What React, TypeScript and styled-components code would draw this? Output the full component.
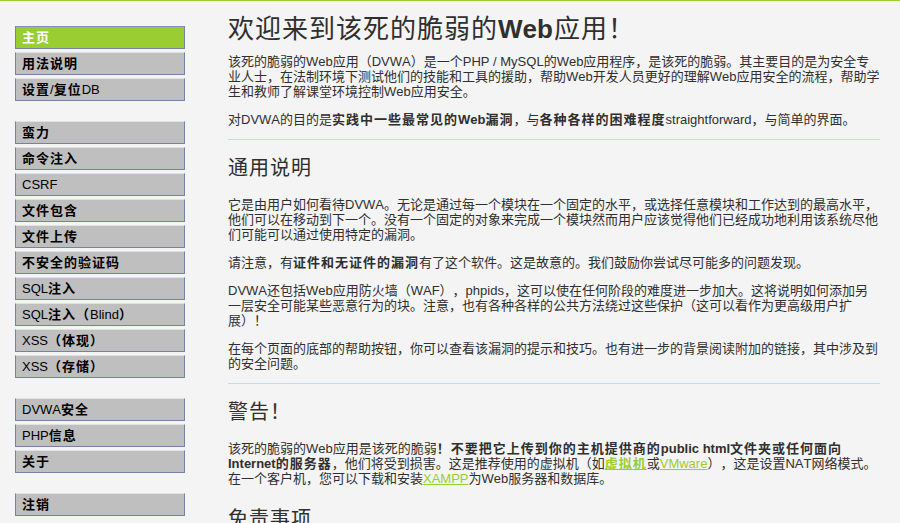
import React from "react";
import styled, { createGlobalStyle } from "styled-components";

const Global = createGlobalStyle`
  html, body { margin: 0; padding: 0; }
  body {
    background: #f4f4f4;
    color: #2f2f2f;
    font: 13px/15px "Liberation Sans", "Noto Sans CJK SC", sans-serif;
    text-spacing-trim: space-all;
    font-kerning: none;
    font-feature-settings: "halt" 0, "chws" 0, "palt" 0, "kern" 0;
  }
`;

const Page = styled.div`
  border-top: 1px solid #9acd32;
  display: flex;
  align-items: flex-start;
  gap: 43px;
  padding: 25px 20px 0 15px;
  height: 497px;
  overflow: hidden;
`;

const Menu = styled.nav`
  width: 170px;
  flex: none;
  display: flex;
  flex-direction: column;
  gap: 20px;
`;

const Group = styled.ul`
  list-style: none;
  margin: 0;
  padding: 0;
  display: flex;
  flex-direction: column;
  gap: 3px;
`;

const Item = styled.li<{ $selected?: boolean }>`
  box-sizing: border-box;
  height: 23px;
  padding: 0 0 0 6px;
  display: flex;
  align-items: center;
  font-weight: bold;
  font-size: 13px;
  letter-spacing: 1px;
  white-space: pre;
  background: ${(p) => (p.$selected ? "#9acd32" : "#bfbfbf")};
  color: ${(p) => (p.$selected ? "#ffffff" : "#000000")};
  border: 1px solid #7383a3;
  border-top-color: ${(p) => (p.$selected ? "#7f8fbf" : "#e2e2e2")};
`;

const Latin = styled.span`
  font-weight: normal;
  letter-spacing: 0;
`;

const Main = styled.main`
  flex: 1;
  min-width: 0;
`;

const H1 = styled.h1`
  font-size: 26px;
  line-height: 30px;
  font-weight: normal;
  letter-spacing: 1px;
  margin: -12px 0 10px;
  color: #2f2f2f;
  b { font-weight: bold; letter-spacing: 0; margin-right: 1px; }
`;

const Rule = styled.hr`
  border: none;
  border-top: 1px solid #c8d8f2;
  margin: -1px 0 0;
`;

const H2 = styled.h2`
  font-size: 20px;
  line-height: 26px;
  font-weight: normal;
  letter-spacing: 1px;
  margin: 20px 0 14px;
  color: #2f2f2f;
  ${Rule} + & { margin-top: 15px; margin-bottom: 16px; }
`;

const P = styled.p`
  margin: 0 0 13px;
  text-spacing-trim: space-all;
  b { font-weight: bold; letter-spacing: 1px; }
  b i { font-style: normal; letter-spacing: 0; }
`;

const GreenLink = styled.a<{ $bold?: boolean }>`
  color: #9acd32;
  text-decoration: underline;
  font-weight: ${(p) => (p.$bold ? "bold" : "normal")};
  letter-spacing: ${(p) => (p.$bold ? "1px" : "0")};
`;

const groups: string[][] = [
  ["主页", "用法说明", "设置/复位DB"],
  [
    "蛮力",
    "命令注入",
    "CSRF",
    "文件包含",
    "文件上传",
    "不安全的验证码",
    "SQL注入",
    "SQL注入（Blind）",
    "XSS（体现）",
    "XSS（存储）",
  ],
  ["DVWA安全", "PHP信息", "关于"],
  ["注销"],
];

function renderLabel(label: string) {
  const parts = label.split(/([A-Za-z0-9/]+)/).filter(Boolean);
  return parts.map((part, i) =>
    /^[A-Za-z0-9/]+$/.test(part) ? <Latin key={i}>{part}</Latin> : <React.Fragment key={i}>{part}</React.Fragment>
  );
}

export default function App() {
  return (
    <>
      <Global />
      <Page>
        <Menu>
          {groups.map((g, gi) => (
            <Group key={gi}>
              {g.map((label) => (
                <Item key={label} $selected={label === "主页"}>
                  {renderLabel(label)}
                </Item>
              ))}
            </Group>
          ))}
        </Menu>
        <Main>
          <H1>
            欢迎来到该死的脆弱的<b>Web</b>应用！
          </H1>
          <P>
            该死的脆弱的Web应用（DVWA）是一个PHP / MySQL的Web应用程序，是该死的脆弱。其主要目的是为安全专业人士，在法制环境下测试他们的技能和工具的援助，帮助Web开发人员更好的理解Web应用安全的流程，帮助学生和教师了解课堂环境控制Web应用安全。
          </P>
          <P>
            对DVWA的目的是<b>实践中一些最常见的<i>Web</i>漏洞</b>，与<b>各种各样的困难程度</b>straightforward，与简单的界面。
          </P>
          <Rule />
          <H2>通用说明</H2>
          <P>
            它是由用户如何看待DVWA。无论是通过每一个模块在一个固定的水平，或选择任意模块和工作达到的最高水平，他们可以在移动到下一个。没有一个固定的对象来完成一个模块然而用户应该觉得他们已经成功地利用该系统尽他们可能可以通过使用特定的漏洞。
          </P>
          <P>
            请注意，有<b>证件和无证件的漏洞</b>有了这个软件。这是故意的。我们鼓励你尝试尽可能多的问题发现。
          </P>
          <P>
            DVWA还包括Web应用防火墙（WAF），phpids，这可以使在任何阶段的难度进一步加大。这将说明如何添加另一层安全可能某些恶意行为的块。注意，也有各种各样的公共方法绕过这些保护（这可以看作为更高级用户扩展）！
          </P>
          <P>
            在每个页面的底部的帮助按钮，你可以查看该漏洞的提示和技巧。也有进一步的背景阅读附加的链接，其中涉及到的安全问题。
          </P>
          <Rule />
          <H2>警告！</H2>
          <P>
            该死的脆弱的Web应用是该死的脆弱<b>！不要把它上传到你的主机提供商的<i>public html</i>文件夹或任何面向<i>Internet</i>的服务器</b>，他们将受到损害。这是推荐使用的虚拟机（如<GreenLink $bold href="#">虚拟机</GreenLink>或<GreenLink href="#">VMware</GreenLink>），这是设置NAT网络模式。在一个客户机，您可以下载和安装<GreenLink href="#">XAMPP</GreenLink>为Web服务器和数据库。
          </P>
          <H2>免责事项</H2>
        </Main>
      </Page>
    </>
  );
}
